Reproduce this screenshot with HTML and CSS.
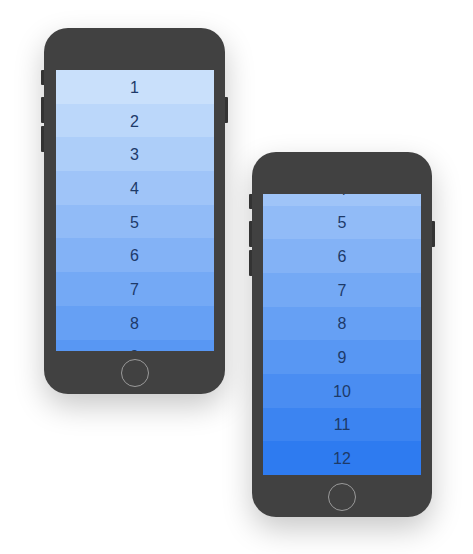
FILE: index.html
```html
<!DOCTYPE html>
<html>
<head>
<meta charset="utf-8">
<link rel="stylesheet" href="styles.css">
</head>
<body>
<div class="stage">
  <div class="phone">
    <span class="btn btn-mute"></span>
    <span class="btn btn-vol-up"></span>
    <span class="btn btn-vol-down"></span>
    <span class="btn btn-power"></span>
    <div class="screen">
      <div class="list">
        <div class="row r1">1</div>
        <div class="row r2">2</div>
        <div class="row r3">3</div>
        <div class="row r4">4</div>
        <div class="row r5">5</div>
        <div class="row r6">6</div>
        <div class="row r7">7</div>
        <div class="row r8">8</div>
        <div class="row r9">9</div>
        <div class="row r10">10</div>
        <div class="row r11">11</div>
        <div class="row r12">12</div>
      </div>
    </div>
    <div class="home"></div>
  </div>
  <div class="phone phone-second">
    <span class="btn btn-mute"></span>
    <span class="btn btn-vol-up"></span>
    <span class="btn btn-vol-down"></span>
    <span class="btn btn-power"></span>
    <div class="screen screen-bottom">
      <div class="list">
        <div class="row r1">1</div>
        <div class="row r2">2</div>
        <div class="row r3">3</div>
        <div class="row r4">4</div>
        <div class="row r5">5</div>
        <div class="row r6">6</div>
        <div class="row r7">7</div>
        <div class="row r8">8</div>
        <div class="row r9">9</div>
        <div class="row r10">10</div>
        <div class="row r11">11</div>
        <div class="row r12">12</div>
      </div>
    </div>
    <div class="home"></div>
  </div>
</div>
</body>
</html>
```
FILE: styles.css
```css
html, body {
  margin: 0;
  padding: 0;
  background: #ffffff;
}
body {
  width: 473px;
  height: 554px;
  overflow: hidden;
  font-family: "Liberation Sans", Arial, sans-serif;
}
.stage {
  display: flex;
  align-items: flex-start;
  gap: 27px;
  padding: 28px 0 0 44px;
}
.phone {
  position: relative;
  width: 181px;
  height: 366px;
  background: #414141;
  border-radius: 24px;
  box-shadow: 0 12px 30px rgba(0, 0, 0, 0.22);
  display: flex;
  flex-direction: column;
  align-items: center;
  flex-shrink: 0;
}
.phone-second {
  width: 180px;
  height: 365px;
  margin-top: 124px;
}
.btn {
  position: absolute;
  width: 3px;
  background: #333333;
}
.btn-mute { left: -3px; top: 42px; height: 15px; border-radius: 1px 0 0 1px; }
.btn-vol-up { left: -3px; top: 69px; height: 26px; border-radius: 1px 0 0 1px; }
.btn-vol-down { left: -3px; top: 98px; height: 26px; border-radius: 1px 0 0 1px; }
.btn-power { right: -3px; top: 69px; height: 26px; border-radius: 0 1px 1px 0; }
.screen {
  margin-top: 42px;
  width: 158px;
  height: 281px;
  overflow: hidden;
  display: flex;
  flex-direction: column;
  flex-shrink: 0;
}
.screen-bottom {
  justify-content: flex-end;
}
.list {
  display: flex;
  flex-direction: column;
  flex-shrink: 0;
}
.row {
  height: 33.7px;
  box-sizing: border-box;
  padding-top: 2px;
  flex-shrink: 0;
  display: flex;
  align-items: center;
  justify-content: center;
  font-size: 16px;
  color: #1d3a69;
}
.r1 { background: rgb(201, 224, 251); }
.r2 { background: rgb(187, 215, 250); }
.r3 { background: rgb(173, 206, 249); }
.r4 { background: rgb(159, 196, 248); }
.r5 { background: rgb(145, 187, 247); }
.r6 { background: rgb(131, 178, 246); }
.r7 { background: rgb(116, 169, 245); }
.r8 { background: rgb(102, 160, 244); }
.r9 { background: rgb(88, 151, 243); }
.r10 { background: rgb(74, 141, 242); }
.r11 { background: rgb(60, 132, 241); }
.r12 { background: rgb(46, 123, 240); }
.home {
  margin-top: 8px;
  width: 26px;
  height: 26px;
  border: 1.2px solid #9a9a9a;
  border-radius: 50%;
  box-sizing: content-box;
}
```
